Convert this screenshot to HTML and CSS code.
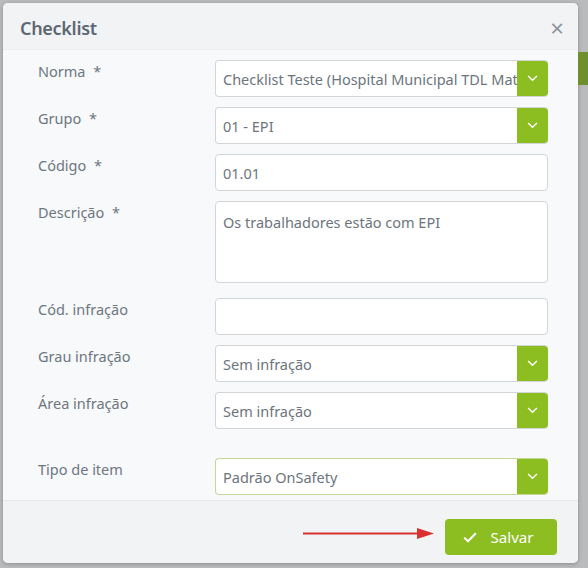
FILE: index.html
```html
<!DOCTYPE html>
<html lang="pt">
<head>
<meta charset="utf-8">
<title>Checklist</title>
<link rel="stylesheet" href="styles.css">
</head>
<body>
<div class="modal">
  <div class="modal-header">
    <h2 class="modal-title">Checklist</h2>
    <span class="close">&times;</span>
  </div>
  <div class="modal-body">
    <div class="row">
      <label class="lbl">Norma <span class="req">*</span></label>
      <div class="select"><span class="val">Checklist Teste (Hospital Municipal TDL Materno Infantil)</span><span class="caret"><svg viewBox="0 0 12 8" width="11" height="7"><path d="M1 1.2 L6 6 L11 1.2" fill="none" stroke="#fff" stroke-width="1.6"/></svg></span></div>
    </div>
    <div class="row">
      <label class="lbl">Grupo <span class="req">*</span></label>
      <div class="select"><span class="val">01 - EPI</span><span class="caret"><svg viewBox="0 0 12 8" width="11" height="7"><path d="M1 1.2 L6 6 L11 1.2" fill="none" stroke="#fff" stroke-width="1.6"/></svg></span></div>
    </div>
    <div class="row">
      <label class="lbl">Código <span class="req">*</span></label>
      <div class="input"><span class="val">01.01</span></div>
    </div>
    <div class="row">
      <label class="lbl">Descrição <span class="req">*</span></label>
      <div class="input textarea"><span class="val">Os trabalhadores estão com EPI</span></div>
    </div>
    <div class="row extra-top">
      <label class="lbl">Cód. infração</label>
      <div class="input"></div>
    </div>
    <div class="row">
      <label class="lbl">Grau infração</label>
      <div class="select"><span class="val">Sem infração</span><span class="caret"><svg viewBox="0 0 12 8" width="11" height="7"><path d="M1 1.2 L6 6 L11 1.2" fill="none" stroke="#fff" stroke-width="1.6"/></svg></span></div>
    </div>
    <div class="row">
      <label class="lbl">Área infração</label>
      <div class="select"><span class="val">Sem infração</span><span class="caret"><svg viewBox="0 0 12 8" width="11" height="7"><path d="M1 1.2 L6 6 L11 1.2" fill="none" stroke="#fff" stroke-width="1.6"/></svg></span></div>
    </div>
    <div class="row big-top">
      <label class="lbl">Tipo de item</label>
      <div class="select focus"><span class="val">Padrão OnSafety</span><span class="caret"><svg viewBox="0 0 12 8" width="11" height="7"><path d="M1 1.2 L6 6 L11 1.2" fill="none" stroke="#fff" stroke-width="1.6"/></svg></span></div>
    </div>
  </div>
  <div class="modal-footer">
    <svg class="arrow" viewBox="0 0 132 12" width="132" height="12"><path d="M0 6.5 L118 6.5" stroke="#d93030" stroke-width="2"/><path d="M114 1 L131 6.5 L114 12 Z" fill="#d93030"/></svg>
    <button class="btn"><svg viewBox="0 0 14 11" width="14" height="11"><path d="M1.2 5.6 L5 9.3 L12.8 1.3" fill="none" stroke="#fff" stroke-width="2"/></svg><span>Salvar</span></button>
  </div>
</div>
<div class="behind">
  <div class="strip"></div>
</div>
</body>
</html>
```
FILE: styles.css
```css
html, body {
  margin: 0;
  padding: 0;
}
body {
  background: #b9bbbc;
  display: flex;
  align-items: flex-start;
  padding: 3px 0 0 3px;
  height: 568px;
  box-sizing: border-box;
  font-family: "Noto Sans", "Open Sans", sans-serif;
  overflow: hidden;
}
.modal {
  width: 575px;
  height: 560px;
  background: #f8f9fa;
  border-radius: 5px;
  box-shadow: 0 1px 4px rgba(0,0,0,0.25);
  display: flex;
  flex-direction: column;
  overflow: hidden;
  flex-shrink: 0;
}
.modal-header {
  height: 47px;
  box-sizing: border-box;
  background: #f2f3f4;
  border-bottom: 1px solid #eceef0;
  display: flex;
  align-items: center;
  justify-content: space-between;
  padding: 4px 14px 0 17px;
}
.modal-title {
  margin: 0;
  font-size: 18px;
  font-weight: 600;
  color: #5d6874;
  letter-spacing: -0.3px;
}
.close {
  font-size: 24px;
  line-height: 1;
  color: #8c959d;
  font-weight: 400;
}
.modal-body {
  flex: 1;
  padding: 10px 30px 0 35px;
  display: flex;
  flex-direction: column;
  gap: 10px;
}
.row {
  display: grid;
  grid-template-columns: 177px 1fr;
}
.row.extra-top {
  margin-top: 5px;
}
.row.big-top {
  margin-top: 19px;
}
.lbl {
  color: #6c7781;
  font-size: 14.5px;
  line-height: 20px;
  padding-top: 1px;
}
.req {
  margin-left: 4px;
}
.input, .select {
  height: 37px;
  box-sizing: border-box;
  background: #fff;
  border: 1px solid #d3d6d9;
  border-radius: 4px;
  display: flex;
  align-items: center;
  overflow: hidden;
  color: #6c757d;
  font-size: 14.5px;
}
.val {
  padding-left: 7px;
  white-space: nowrap;
  overflow: hidden;
  flex: 1;
  min-width: 0;
}
.textarea {
  height: 82px;
  align-items: flex-start;
  padding-top: 10px;
}
.select {
  border-right: none;
}
.select.focus {
  border-color: #c3d896;
}
.caret {
  width: 31px;
  height: 37px;
  margin-top: -1px;
  margin-bottom: -1px;
  background: #8cbe22;
  border-radius: 0 4px 4px 0;
  display: flex;
  align-items: center;
  justify-content: center;
  flex-shrink: 0;
}
.modal-footer {
  height: 63px;
  box-sizing: border-box;
  background: #f2f3f4;
  border-top: 1px solid #e6e8ea;
  display: flex;
  align-items: center;
  justify-content: flex-end;
  gap: 10px;
  padding: 0 21px 0 0;
}
.arrow {
  margin-top: 2px;
}
.btn {
  width: 112px;
  height: 36px;
  background: #8cbe22;
  border: none;
  border-radius: 4px;
  color: #fff;
  font-family: "Noto Sans", "Open Sans", sans-serif;
  font-size: 15px;
  display: flex;
  align-items: center;
  justify-content: center;
  gap: 14px;
  margin-top: 10px;
  padding: 0 6px 0 0;
}
.behind {
  flex: 1;
  height: 560px;
  display: flex;
  flex-direction: column;
}
.strip {
  margin-top: 49px;
  height: 33px;
  background: #6f8e2c;
}
```
